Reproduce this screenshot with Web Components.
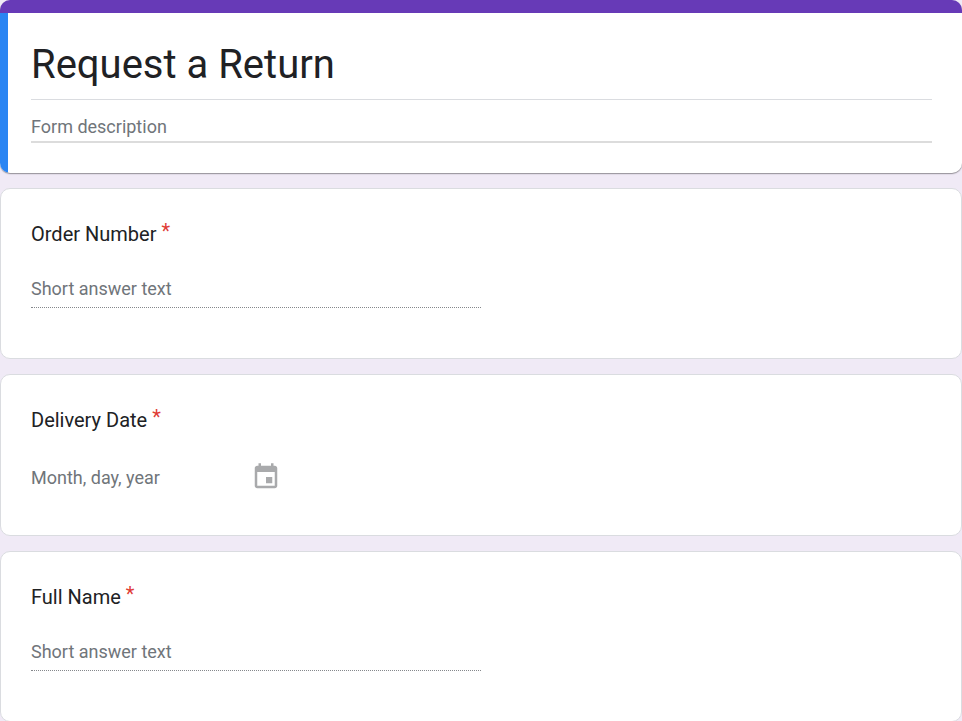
<!DOCTYPE html>
<html lang="en">
<head>
<meta charset="utf-8">
<meta name="viewport" content="width=device-width, initial-scale=1">
<title>Request a Return</title>
<style>
  body {
    margin: 0;
    background: #f0eaf6;
    color: #202124;
    font-family: Roboto, "Liberation Sans", sans-serif;
  }
</style>
</head>
<body>
<form-page>
  <form-header heading="Request a Return" hint="Form description"></form-header>
  <text-question hint="Short answer text">Order Number</text-question>
  <date-question hint="Month, day, year">Delivery Date</date-question>
  <text-question hint="Short answer text">Full Name</text-question>
</form-page>

<template id="page-template">
  <style>
    :host { display: block; }
    main { display: flex; flex-direction: column; gap: 15px; }
  </style>
  <main><slot></slot></main>
</template>

<template id="header-template">
  <style>
    :host { display: block; }
    header {
      overflow: hidden;
      border-radius: 10px;
      border-top: 13px solid #673ab7;
      background: #fff;
      box-shadow: 0 1px 1px rgba(0, 0, 0, .3), 0 1px 2px rgba(0, 0, 0, .12);
    }
    .fields {
      display: flex;
      flex-direction: column;
      padding: 24px 30px 30px 23px;
      border-left: 8px solid #2a85f3;
    }
    input {
      box-sizing: border-box;
      width: 100%;
      margin: 0;
      padding: 0;
      border: 0;
      border-radius: 0;
      outline: 0;
      background: transparent;
      color: #202124;
      font-family: inherit;
    }
    .title { height: 63px; padding-bottom: 8px; border-bottom: 1px solid #dadce0; font-size: 40px; }
    .description { height: 43px; padding-top: 12px; border-bottom: 2px solid #dcdcdc; font-size: 18px; }
    .description::placeholder { color: #70757a; opacity: 1; }
  </style>
  <header>
    <div class="fields">
      <input class="title" type="text" aria-label="Form title">
      <input class="description" type="text" aria-label="Form description">
    </div>
  </header>
</template>

<template id="text-template">
  <style>
    :host { display: block; }
    section { padding: 30px 30px 50px; border: 1px solid #dadce0; border-radius: 10px; background: #fff; }
    label { display: block; font-size: 20px; line-height: 30px; }
    .required { color: #e03c36; position: relative; top: -3px; }
    input {
      display: block;
      box-sizing: border-box;
      width: 50%;
      height: 40px;
      margin: 19px 0 0;
      padding: 2px 0 0;
      border: 0;
      border-bottom: 1px dotted #85888c;
      border-radius: 0;
      outline: 0;
      background: transparent;
      color: #202124;
      font: 18px/24px Roboto, "Liberation Sans", sans-serif;
    }
    input::placeholder { color: #70757a; opacity: 1; }
  </style>
  <section>
    <label for="answer"><slot></slot> <span class="required">*</span></label>
    <input id="answer" type="text" required>
  </section>
</template>

<template id="date-template">
  <style>
    :host { display: block; }
    section { padding: 30px 30px 43px; border: 1px solid #dadce0; border-radius: 10px; background: #fff; }
    label { display: block; font-size: 20px; line-height: 30px; }
    .required { color: #e03c36; position: relative; top: -3px; }
    .date { display: flex; align-items: center; width: 250px; height: 30px; margin-top: 27px; }
    input {
      flex: 1;
      min-width: 0;
      height: 30px;
      padding: 0;
      border: 0;
      outline: 0;
      background: transparent;
      color: #202124;
      font: 18px/24px Roboto, "Liberation Sans", sans-serif;
    }
    input::placeholder { color: #70757a; opacity: 1; }
    button { display: flex; padding: 0; border: 0; background: transparent; color: #a9aaac; }
    svg { width: 30px; height: 30px; fill: currentColor; }
  </style>
  <section>
    <label for="answer"><slot></slot> <span class="required">*</span></label>
    <div class="date">
      <input id="answer" type="text" required>
      <button type="button" aria-label="Choose a date">
        <svg viewBox="0 0 24 24" aria-hidden="true"><path d="M17 12h-5v5h5v-5zM16 1v2H8V1H6v2H5c-1.11 0-1.99.9-1.99 2L3 19c0 1.1.89 2 2 2h14c1.1 0 2-.9 2-2V5c0-1.1-.9-2-2-2h-1V1h-2zm3 18H5V8h14v11z"/></svg>
      </button>
    </div>
  </section>
</template>

<script>
  class TemplateElement extends HTMLElement {
    constructor() {
      super();
      const template = document.getElementById(this.constructor.template);
      this.attachShadow({ mode: "open" }).append(template.content.cloneNode(true));
    }
  }

  class FormPage extends TemplateElement {
    static template = "page-template";
  }

  class FormHeader extends TemplateElement {
    static template = "header-template";
    connectedCallback() {
      this.shadowRoot.querySelector(".title").value = this.getAttribute("heading");
      this.shadowRoot.querySelector(".description").placeholder = this.getAttribute("hint");
    }
  }

  class Question extends TemplateElement {
    connectedCallback() {
      this.shadowRoot.querySelector("input").placeholder = this.getAttribute("hint");
    }
  }

  class TextQuestion extends Question {
    static template = "text-template";
  }

  class DateQuestion extends Question {
    static template = "date-template";
  }

  customElements.define("form-page", FormPage);
  customElements.define("form-header", FormHeader);
  customElements.define("text-question", TextQuestion);
  customElements.define("date-question", DateQuestion);
</script>
</body>
</html>
